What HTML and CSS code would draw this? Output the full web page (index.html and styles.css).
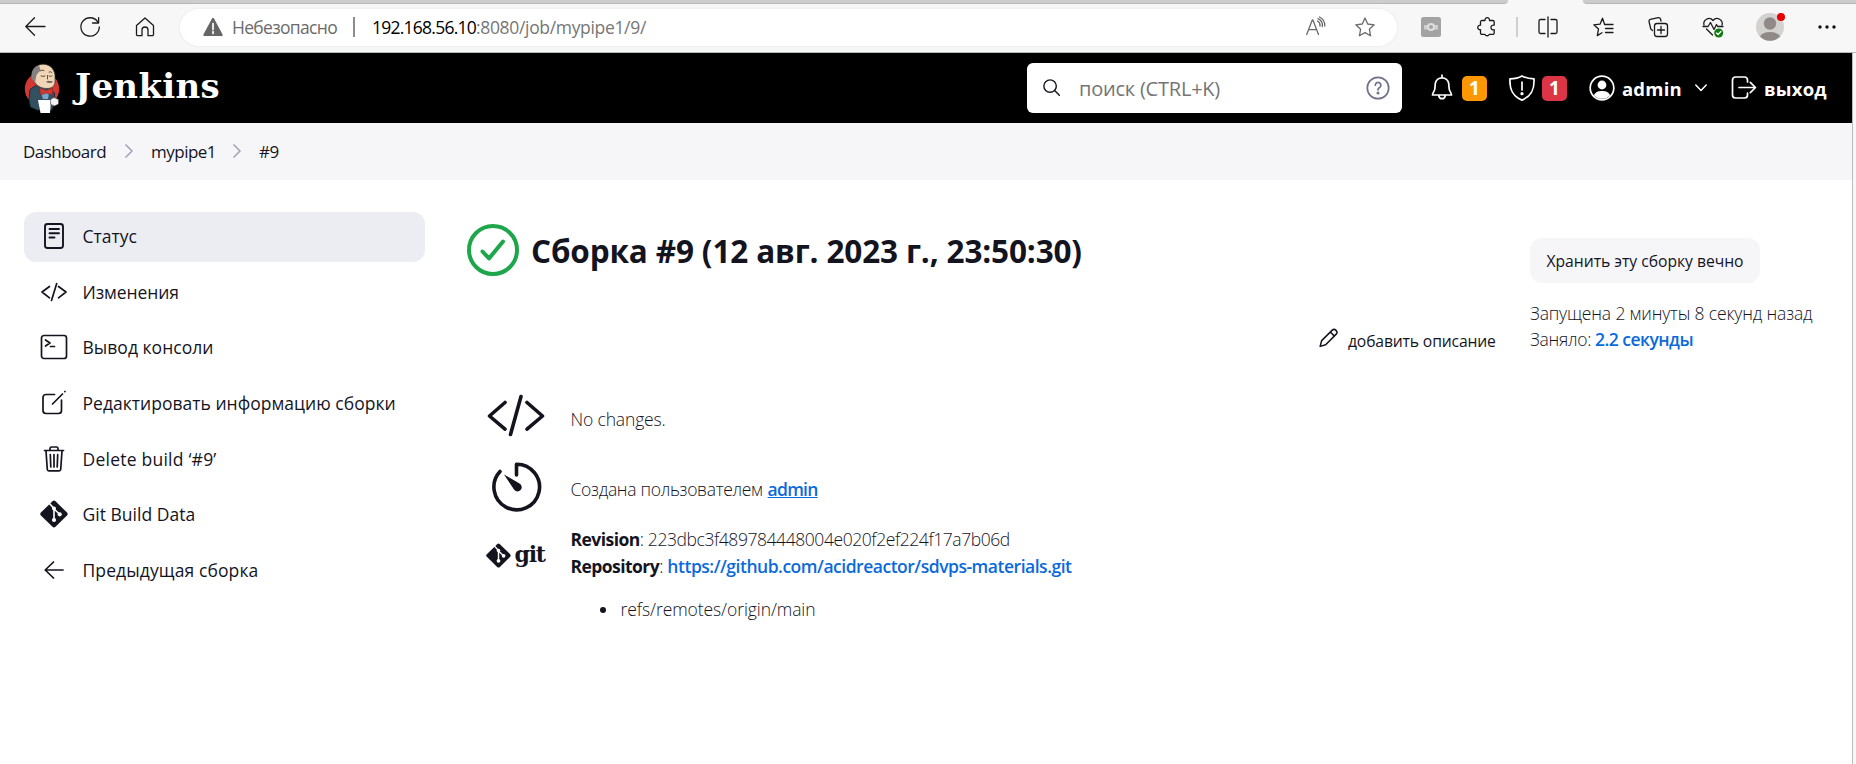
FILE: index.html
```html
<!DOCTYPE html>
<html lang="ru">
<head>
<meta charset="utf-8">
<title>mypipe1 #9 [Jenkins]</title>
<link rel="stylesheet" href="styles.css">
</head>
<body>
<div class="tabstrip"><span class="tab-left"></span><span class="tab-right"></span></div>
<div class="toolbar">
  <svg class="ti" viewBox="0 0 20 20"><path d="M20 9.5H1M9.5 .8L.8 9.5l8.7 8.7"/></svg>
  <svg class="ti" viewBox="0 0 20 20"><path d="M17.6 4.6A9.2 9.2 0 1 0 19.3 10M18.6 .6V6H12.5"/></svg>
  <svg class="ti" viewBox="0 0 20 20"><path d="M1.5 8.6L10 1l8.500 7.600V17.500a1.200 1.200 0 0 1-1.200 1.200H13V13a3 3 0 0 0-6 0v5.700H2.700a1.200 1.200 0 0 1-1.200-1.200z"/></svg>
  <div class="pill">
    <svg class="warn" viewBox="0 0 20 20"><path d="M10 1.800L18.700 18H1.300z" fill="#666" stroke="#666" stroke-width="2" stroke-linejoin="round"/><path d="M10 6.500v6M10 14.500v2" stroke="#fff" stroke-width="1.700"/></svg>
    <span class="insecure">Небезопасно</span>
    <i class="bar"></i>
    <span class="url"><b>192.168.56.10</b>:8080/job/mypipe1/9/</span>
    <svg class="read" viewBox="0 0 20 20"><path d="M.7 17.500L6.300 3h.6L12.500 17.500M2.500 12.600h8.200M11.500 4a5 5 0 0 1 2.500 5M12 1.600a7.500 7.500 0 0 1 4.300 8M13.500 0a9.500 9.500 0 0 1 5.300 9"/></svg>
    <svg class="star" viewBox="0 0 20 20"><path d="M10 1l2.700 6 6.500.8-4.800 4.500 1.200 6.500L10 15.600l-5.600 3.200 1.200-6.500L.8 7.800 7.300 7z"/></svg>
  </div>
  <svg class="ti t-ext" viewBox="0 0 20 20"><rect width="20" height="20" rx="2.500" fill="#a3a3a3" stroke="none"/><path d="M3 8h14v4.500H3z" fill="#cfcfcf" stroke="none"/><circle cx="10" cy="10" r="3" fill="#a3a3a3" stroke="#dedede" stroke-width="2"/></svg>
  <svg class="ti t-puz" viewBox="0 0 20 20"><path d="M4.500 3.500H8a2.300 2.300 0 1 1 4.500 0h3.200a1.500 1.500 0 0 1 1.500 1.500v3.200a2.400 2.400 0 1 0 0 4.500v3.200a1.500 1.500 0 0 1-1.500 1.500h-3.500a2.300 2.300 0 0 1-4.200 0H5a1.500 1.500 0 0 1-1.500-1.500v-3.200a2.300 2.300 0 1 1 0-4.500V5a1.500 1.500 0 0 1 1-1.500z"/></svg>
  <i class="tdiv"></i>
  <svg class="ti t-split" viewBox="0 0 20 20"><path d="M7 2.500H2.500A1.500 1.500 0 0 0 1 4v11a1.500 1.500 0 0 0 1.500 1.500H7M13 2.500h4.500A1.500 1.500 0 0 1 19 4v11a1.500 1.500 0 0 1-1.500 1.500H13M10 0v20"/></svg>
  <svg class="ti t-fav" viewBox="0 0 20 20"><path d="M11.500 7.300L9.500 1.200 7 7.200.8 7.800l4.700 4.300L4.300 18.600 9 15.800M11.500 7.500H20M12.500 11.500H20M12.500 15.500H20"/></svg>
  <svg class="ti t-col" viewBox="0 0 20 20"><rect x="6.500" y="6.500" width="13" height="13" rx="2.500"/><path d="M13 9.500v7M9.500 13h7M4.500 13.500L2.800 12 1 4.500A2 2 0 0 1 2.300 2.300l8-1.700a2 2 0 0 1 2.200 1.400l.5 2"/></svg>
  <svg class="ti t-heart" viewBox="0 0 20 20"><path d="M1 8C-.3 3.500 6-1.500 10 3.500 14-1.500 20.500 3.500 19 8M3.500 12l6 6M0 9.500h5l2.500-4 3.500 7 2.500-5 1.200 2H20"/><circle cx="15.700" cy="16" r="4.500" fill="#107c10" stroke="none"/><path d="M13.500 16l1.600 1.500 2.800-3" stroke="#fff"/></svg>
  <svg class="avatar" viewBox="0 0 28 28"><circle cx="14" cy="14" r="14" fill="#d4d2d0"/><circle cx="14" cy="10.500" r="6.200" fill="#8f8a87"/><path d="M4 23.500a10.500 6.500 0 0 1 20 0A14 14 0 0 1 4 23.500z" fill="#8f8a87"/><circle cx="25" cy="4" r="4" fill="#e60000"/></svg>
  <svg class="ti t-dots" viewBox="0 0 20 20"><g fill="#111" stroke="none"><circle cx="3" cy="10" r="1.700"/><circle cx="10" cy="10" r="1.700"/><circle cx="17" cy="10" r="1.700"/></g></svg>
</div>
<div class="viewport">
<header class="header">
  <svg class="logo" viewBox="0 0 36 51">
    <ellipse cx="18" cy="26" rx="17.200" ry="17" fill="#d33833"/>
    <path d="M11 23L6 26.500 5 36l1.500 8 7 3h14l3-6V30l-6-5z" fill="#335061" stroke="#1c2f3a"/>
    <path d="M9 15C7 6 13 1.200 19 1.200S30 5 31 12v7c-.5 5-4 6.500-8 6.500-6 0-12-2.500-14-10.500z" fill="#f0d6b7" stroke="#3a332e" stroke-width=".7"/>
    <path d="M15 2.500C8 4 6.500 11 8 16l3 4 1.500-8 4-5z" fill="#858182"/>
    <path d="M16 8q2-2 4-.5M25 9q2-1 3 .5M17 13q2 1 4 0M25 13q2 1 3 0M23.500 12.500v3.500" stroke="#4d4139" stroke-width=".9"/>
    <path d="M22 19q2.500-2 4-.8 2-.6 3 .8-3 2-7 0z" fill="#6d625c"/>
    <path d="M17 30l8 0-1 6h-5z" fill="#7aa7c7"/>
    <path d="M16 25l6.500 2.500L28.500 25v7l-6-2-6 2z" fill="#d33833" stroke="#81201d" stroke-width=".5"/>
    <path d="M14 37h13l-1 13h-9.500z" fill="#fff"/>
    <path d="M27 36l3-1.500 4.500 2v4.500l-4 2-3.500-1.500z" fill="#f2f2f2" stroke="#444" stroke-width=".6"/>
  </svg>
  <span class="brand">Jenkins</span>
  <div class="search">
    <svg class="mag" viewBox="0 0 18 18"><circle cx="7.500" cy="7.500" r="6.600"/><path d="M12.300 12.300l5 5"/></svg>
    <span class="ph">поиск (CTRL+K)</span>
    <svg class="help" viewBox="0 0 24 24"><circle cx="12" cy="12" r="10.700"/><path d="M9.300 9.200a2.800 2.800 0 1 1 4.300 2.300c-1 .7-1.600 1.200-1.600 2.400"/><circle cx="12" cy="17" r=".7"/></svg>
  </div>
  <svg class="hi bell" viewBox="0 0 26 26"><path d="M3.500 20c0-2.500 2-3.500 2.300-6l.5-5.500a6.800 6.800 0 0 1 13.400 0l.5 5.500c.3 2.500 2.300 3.500 2.300 6zM13 0v2M9.700 20.500a3.400 4.200 0 0 0 6.600 0"/></svg>
  <span class="badge orange">1</span>
  <svg class="hi shield" viewBox="0 0 26 26"><path d="M13 .9C9.500 3 5 3.800 1 3.800c-.6 10 2 17 12 21.300C23 20.800 25.600 13.800 25 3.800 21 3.800 16.500 3 13 .9zM13 7v8"/><circle cx="13" cy="18.700" r=".8" fill="#fff"/></svg>
  <span class="badge red">1</span>
  <svg class="hi user" viewBox="0 0 26 26"><circle cx="13" cy="13" r="11.800" stroke-width="1.700"/><circle cx="13" cy="10" r="4.400" fill="#fff" stroke="none"/><path d="M4.800 20.200c2-3.700 5-4.200 8.200-4.200s6.200.5 8.200 4.200A11 11 0 0 1 4.800 20.200z" fill="#fff" stroke="none"/></svg>
  <span class="hname">admin</span>
  <svg class="chev" viewBox="0 0 12 8"><path d="M.8 1l5.200 5.500L11.200 1"/></svg>
  <svg class="hi exit" viewBox="0 0 26 26"><path d="M16.500 7V5a3 3 0 0 0-3-3H4.500a3 3 0 0 0-3 3v15a3 3 0 0 0 3 3h9a3 3 0 0 0 3-3v-2M8 12.500h16.500M19.300 7.300l5.200 5.200-5.200 5.200"/></svg>
  <span class="hname">выход</span>
</header>
<nav class="crumbs">
  <span>Dashboard</span>
  <svg class="cr cr1" viewBox="0 0 8 14"><path d="M1 1l6 6-6 6"/></svg>
  <span>mypipe1</span>
  <svg class="cr cr2" viewBox="0 0 8 14"><path d="M1 1l6 6-6 6"/></svg>
  <span>#9</span>
</nav>
<div class="page">
  <aside class="side">
    <a class="task active"><svg viewBox="0 0 28 28"><rect x="5" y="2" width="18" height="24" rx="2.500"/><path d="M9.500 7h9.500M9.500 11.200h9.500M9.500 15.500h5"/></svg><span>Статус</span></a>
    <a class="task changes"><svg viewBox="0 0 28 28"><path d="M9.500 8.500L2 14l7.500 5.800M18.500 8.500L26 14l-7.500 5.800M16.700 5.500L11.500 22.500" stroke-width="1.700"/></svg><span>Изменения</span></a>
    <a class="task"><svg viewBox="0 0 28 28"><rect x="1.500" y="2.500" width="25" height="23" rx="2.500" stroke-width="1.700"/><path d="M5.500 7l4.500 3-4.500 3M10.500 13.500h4" stroke-width="1.700"/></svg><span>Вывод консоли</span></a>
    <a class="task"><svg viewBox="0 0 28 28"><path d="M14.500 5.500H6A3 3 0 0 0 3 8.500v13a3 3 0 0 0 3 3h12.500a3 3 0 0 0 3-3V11M12.500 15L22.500 5M24.800 2.700l.2-.2" stroke-width="1.700"/></svg><span>Редактировать информацию сборки</span></a>
    <a class="task delete"><svg viewBox="0 0 28 28"><path d="M4.500 5.500h19M6 6l1.300 18.500a1.500 1.500 0 0 0 1.500 1.300h10.400a1.500 1.500 0 0 0 1.500-1.300L22 6M10 5.500v-2a1.500 1.500 0 0 1 1.500-1.500h5a1.500 1.500 0 0 1 1.500 1.500v2M10.300 9.500l.5 12.500M14 9.500V22M17.700 9.500L17.200 22" stroke-width="1.700"/></svg><span>Delete build ‘#9’</span></a>
    <a class="task"><svg viewBox="0 0 28 28"><use href="#gitmark"/></svg><span>Git Build Data</span></a>
    <a class="task previous"><svg viewBox="0 0 28 28"><path d="M23 14H5.200M13.500 6l-8.300 8 8.300 8" stroke-width="1.700"/></svg><span>Предыдущая сборка</span></a>
  </aside>
  <main class="main">
    <div class="top">
      <h1><svg class="ok" viewBox="0 0 52 52"><circle cx="26" cy="26" r="24"/><path d="M15.500 27.500l6.500 7L36 17.500"/></svg><span>Сборка #9 (12 авг. 2023 г., 23:50:30)</span></h1>
      <a class="desc"><svg viewBox="0 0 20 20"><path d="M1.200 18.800l1.600-6L13.700 2a2.900 2.900 0 0 1 4.200 4.200L7 17.200zM12 3.700L16.200 8"/></svg><span>добавить описание</span></a>
      <div class="info">
        <button class="keep">Хранить эту сборку вечно</button>
        <p class="started">Запущена 2 минуты 8 секунд назад</p>
        <p class="took">Заняло:<a class="gap">2.2 секунды</a></p>
      </div>
    </div>
    <div class="row r1">
      <svg class="big" viewBox="0 0 60 60"><path d="M19 15.500L3.500 29l15.500 13.200M41 15.500L56.500 29 41 42.200M35 9.500L24.500 47.500" stroke-width="3.600"/></svg>
      <span>No changes.</span>
    </div>
    <div class="row r2">
      <svg class="big" viewBox="0 0 60 60"><path d="M14 14.500A22.800 22.800 0 1 0 30.500 7.200V18" stroke-width="3.600"/><path d="M18 17.500L33.500 26.500a4.200 4.200 0 1 1-5.500 6z" fill="#14141f" stroke="none"/></svg>
      <span>Создана пользователем</span><a class="user-link">admin</a>
    </div>
    <div class="row r3">
      <div class="gitlogo"><svg viewBox="0 0 28 28"><g id="gitmark"><path d="M12.500 1.300a2.200 2.200 0 0 1 3 0L27 12.500a2.200 2.200 0 0 1 0 3L15.500 26.800a2.200 2.200 0 0 1-3 0L.9 15.500a2.200 2.200 0 0 1 0-3z" fill="#14141f" stroke="none"/><path d="M9.500 3.500L14 8.500V20M14 9l6 5.500" stroke="#fff" stroke-width="1.600"/><g fill="#fff" stroke="none"><circle cx="14" cy="8.500" r="2"/><circle cx="14" cy="20" r="2.100"/><circle cx="19.700" cy="14.300" r="2.100"/></g></g></svg><span>git</span></div>
      <div class="gitinfo">
        <p><b>Revision</b><span>:</span><span class="hash">223dbc3f489784448004e020f2ef224f17a7b06d</span></p>
        <p><b>Repository</b><span>:</span><a class="gap">https://github.com/acidreactor/sdvps-materials.git</a></p>
        <div class="ref"><i></i><span>refs/remotes/origin/main</span></div>
      </div>
    </div>
  </main>
</div>
</div>
</body>
</html>
```
FILE: styles.css
```css
* { box-sizing: border-box; }
body { margin: 0; width: 1856px; height: 764px; overflow: hidden; background: #f8f8f8; color: #14141f; font-family: "Open Sans", "Noto Sans", sans-serif; font-size: 17.5px; }
svg { display: block; flex: none; fill: none; stroke-linecap: round; stroke-linejoin: round; }
span, b, a, p { white-space: nowrap; }
p { margin: 0; }

.tabstrip { height: 4px; display: flex; justify-content: space-between; background: #f7f7f7; }
.tab-left { width: 1508px; background: #ccc; border-bottom: 1px solid #b8b8b8; border-bottom-right-radius: 4px; }
.tab-right { width: 273px; background: #ccc; border-bottom: 1px solid #b8b8b8; border-bottom-left-radius: 4px; }

.toolbar { height: 49px; padding: 5px 18px 7px 25px; display: flex; align-items: center; background: #f7f7f7; border-bottom: 1px solid #b4b9b9; }
.ti { width: 20px; height: 20px; margin-right: 35px; stroke: #1b1b1b; stroke-width: 1.3; overflow: visible; }
.pill { width: 1217px; height: 37px; margin-left: -10px; padding-left: 23px; display: flex; align-items: center; flex: none; border-radius: 19px; background: #fff; box-shadow: 0 0 3px #e4e4e4; }
.warn { width: 20px; height: 20px; }
.insecure { width: 121px; margin-left: 9px; color: #6b6b6b; letter-spacing: -.68px; }
.bar { width: 2px; height: 20px; background: #8c8c8c; }
.url { margin-left: 17px; width: 934px; color: #767676; letter-spacing: -.33px; }
.url b { font-weight: 400; color: #000; letter-spacing: -.76px; }
.read, .star { width: 20px; height: 20px; stroke: #6a6a6a; stroke-width: 1.3; overflow: visible; }
.star { margin-left: 29px; }
.t-ext { margin: 0 36px 0 24px; }
.t-puz { margin-right: 19px; }
.tdiv { width: 2px; height: 20px; margin-right: 20px; background: #cfcfcf; }
.t-heart { margin-right: 33px; }
.avatar { width: 28px; height: 28px; margin-right: 33px; overflow: visible; }
.t-dots { margin: 0; }

.viewport { width: 1853px; height: 711px; border-right: 1px solid #bbb; background: #fff; }
.header { height: 70px; display: flex; align-items: center; background: #000; color: #fff; }
.logo { width: 36px; height: 51px; margin-left: 24px; }
.brand { width: 952px; margin: -4px 0 0 15px; font: 700 34px/40px "DejaVu Serif", serif; letter-spacing: .32px; }
.search { width: 375px; height: 50px; padding-left: 16px; display: flex; align-items: center; flex: none; background: #fff; border-radius: 6px; }
.mag { width: 17px; height: 17px; margin-bottom: 2px; stroke: #14141f; stroke-width: 1.5; overflow: visible; }
.ph { width: 287px; margin-left: 19px; font-size: 20px; color: #757575; letter-spacing: -.22px; }
.help { width: 24px; height: 24px; stroke: #70708f; stroke-width: 1.7; }
.hi { width: 26px; height: 26px; stroke: #fff; stroke-width: 1.7; overflow: visible; }
.bell { margin-left: 27px; }
.shield { margin-left: 1px; }
.badge { width: 25px; height: 25px; margin: 0 21px 0 7px; border-radius: 5px; text-align: center; font-weight: 700; font-size: 19px; line-height: 25px; }
.orange { background: #ff9800; }
.red { background: #dc3545; margin-right: 22px; }
.hname { font-weight: 700; font-size: 18.5px; margin-left: 7px; letter-spacing: .2px; width: 60px; }
.chev { width: 12px; height: 8px; margin: 0 24px 0 13px; stroke: #fff; stroke-width: 1.5; }

.crumbs { height: 57px; padding: 0 0 1px 23px; display: flex; align-items: center; background: #f6f6f9; font-size: 17px; font-weight: 500; letter-spacing: -.52px; }
.cr { width: 8px; height: 14px; stroke: #a5a5bb; stroke-width: 1.7; }
.cr1 { margin: 0 18px 0 19px; }
.cr2 { margin: 0 18px 0 17px; }

.page { display: flex; }
.side { width: 401px; margin: 32px 0 0 24px; display: flex; flex-direction: column; gap: 5.7px; flex: none; }
.task { height: 50px; padding: 0 0 2px 16px; display: flex; align-items: center; gap: 14.5px; font-size: 17.5px; font-weight: 500; border-radius: 12px; letter-spacing: .02px; }
.task svg { width: 28px; height: 28px; stroke: #14141f; stroke-width: 1.9; }
.active { background: #ecedf3; }
.changes { letter-spacing: -.1px; }
.delete { letter-spacing: .23px; }
.previous { letter-spacing: .11px; }

.main { margin-left: 42px; width: 1385px; }
.top { display: flex; height: 206px; }
h1 { margin: 44px 0 0; width: 852px; height: 52px; display: flex; align-items: center; gap: 12px; font-size: 31.500px; font-weight: 700; letter-spacing: -.15px; }
.ok { width: 52px; height: 52px; stroke: #1ea64b; stroke-width: 4; }
.desc { width: 211px; height: 30px; margin-top: 142px; display: flex; gap: 10px; font-size: 15.700px; font-weight: 500; line-height: 38px; letter-spacing: -.15px; }
.desc svg { width: 19px; height: 20px; margin-top: 6px; stroke: #14141f; stroke-width: 1.6; }
.info { padding-top: 58px; line-height: 26px; }
.keep { display: block; width: 230px; height: 45px; margin: 0 0 17px; padding: 0; border: 0; border-radius: 12px; background: #f6f6f9; color: #14141f; font: 500 15.700px/46px "Open Sans", sans-serif; text-align: center; letter-spacing: -.03px; }
.info p, .row { font-weight: 300; }
.started { letter-spacing: -.15px; }
.took { letter-spacing: -.28px; }
.row a, .info a { color: #0b6adb; font-weight: 600; letter-spacing: -.48px; }
.info a { letter-spacing: -.52px; }
.gap { margin-left: 4px; }
.row { display: flex; align-items: center; }
.row .user-link { margin-left: 5px; text-decoration: underline; letter-spacing: -.75px; }
.big { width: 60px; height: 60px; margin: 0 24.500px 5px 19px; stroke: #14141f; }
.r1 { height: 66px; letter-spacing: -.15px; }
.r2 { height: 74px; letter-spacing: -.3px; }
.r3 { align-items: flex-start; line-height: 27px; }
.gitlogo { display: flex; align-items: center; width: 84.500px; margin: 17px 0 0 18.500px; gap: 4px; font: 700 22px/26px "DejaVu Serif", serif; letter-spacing: -1.2px; }
.gitlogo svg { width: 25px; height: 25px; }
.gitlogo span { margin-top: -3px; }
.gitinfo { margin-left: .5px; }
.gitinfo b { font-weight: 700; letter-spacing: -.55px; }
.hash { margin-left: 4px; letter-spacing: -.43px; }
.ref { display: flex; align-items: center; margin-top: 16px; padding-left: 29px; letter-spacing: -.08px; }
.ref i { width: 6px; height: 6px; margin-right: 15px; border-radius: 50%; background: #14141f; }
```
